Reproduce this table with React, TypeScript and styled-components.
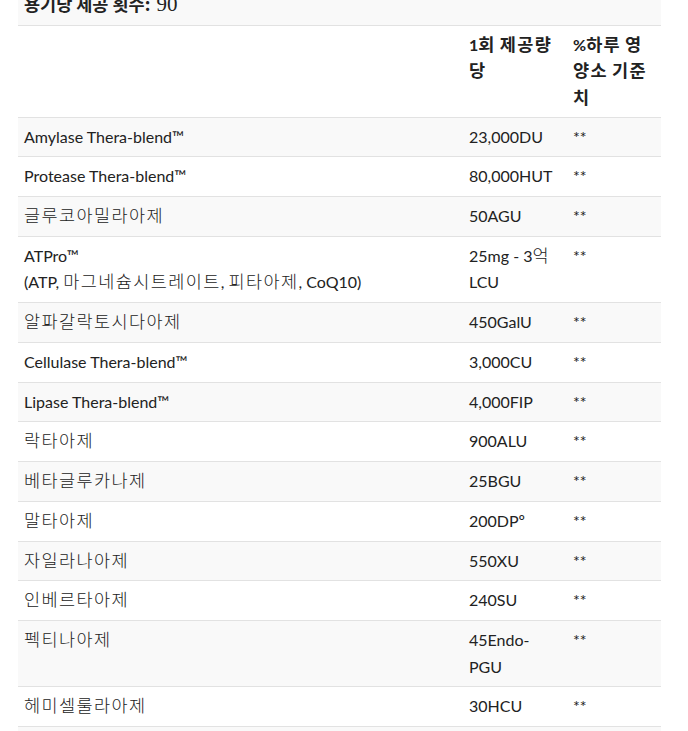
import React from "react";
import styled, { createGlobalStyle } from "styled-components";

const Global = createGlobalStyle`
  html, body { margin: 0; padding: 0; background: #fff; }
  body {
    font-family: Lato, "Noto Sans CJK KR", sans-serif;
    color: #222;
  }
`;

const Page = styled.div`
  width: 688px;
  height: 731px;
  overflow: hidden;
  padding: 0 27px 0 18px;
  box-sizing: border-box;
`;

const Table = styled.table`
  width: 643px;
  margin-top: -14px;
  border-collapse: collapse;
  table-layout: fixed;
  font-size: 16px;
  line-height: 26.5px;
`;

const Row = styled.tr<{ $shade?: boolean }>`
  background: ${(p) => (p.$shade ? "#f9f9f9" : "#fff")};
  border-bottom: 1px solid #e2e2e2;
`;

const Cell = styled.td`
  padding: 6px 6px 6.25px;
  vertical-align: top;
  text-align: left;
`;

const HeadCell = styled.th`
  padding: 6px 6px 5.25px;
  vertical-align: top;
  text-align: left;
  font-weight: 700;
`;

const Label = styled.strong`
  font-weight: 700;
  font-size: 17.5px;
  line-height: 20px;
  font-family: "Noto Sans CJK KR", Lato, sans-serif;
`;

const Count = styled.span`
  font-family: "Liberation Serif", serif;
  font-size: 21px;
  line-height: 20px;
  margin-left: 2px;
`;

const Ko = styled.span<{ $light?: boolean }>`
  font-size: 17.5px;
  line-height: 20px;
  letter-spacing: 1.4px;
  font-weight: ${(p) => (p.$light ? 300 : "inherit")};
`;

function Text({ value, light }: { value: string; light?: boolean }) {
  const parts = value.split(/([\uAC00-\uD7A3]+)/);
  return (
    <>
      {parts.map((p, i) =>
        /[\uAC00-\uD7A3]/.test(p) ? (
          <Ko key={i} $light={light}>
            {p}
          </Ko>
        ) : (
          <React.Fragment key={i}>{p}</React.Fragment>
        )
      )}
    </>
  );
}

const rows: [string, string][] = [
  ["Amylase Thera-blend™", "23,000DU"],
  ["Protease Thera-blend™", "80,000HUT"],
  ["글루코아밀라아제", "50AGU"],
  ["ATPro™\n(ATP, 마그네슘시트레이트, 피타아제, CoQ10)", "25mg - 3억 LCU"],
  ["알파갈락토시다아제", "450GalU"],
  ["Cellulase Thera-blend™", "3,000CU"],
  ["Lipase Thera-blend™", "4,000FIP"],
  ["락타아제", "900ALU"],
  ["베타글루카나제", "25BGU"],
  ["말타아제", "200DPº"],
  ["자일라나아제", "550XU"],
  ["인베르타아제", "240SU"],
  ["펙티나아제", "45Endo-PGU"],
  ["헤미셀룰라아제", "30HCU"],
  ["", ""],
];

export default function App() {
  return (
    <>
      <Global />
      <Page>
        <Table>
          <colgroup>
            <col style={{ width: 445 }} />
            <col style={{ width: 104 }} />
            <col style={{ width: 94 }} />
          </colgroup>
          <tbody>
            <Row $shade>
              <Cell colSpan={3}>
                <Label>용기당 제공 횟수:</Label> <Count>90</Count>
              </Cell>
            </Row>
            <Row>
              <HeadCell></HeadCell>
              <HeadCell>
                <Text value="1회 제공량 당" />
              </HeadCell>
              <HeadCell>
                <Text value="%하루 영양소 기준치" />
              </HeadCell>
            </Row>
            {rows.map(([name, amt], i) => (
              <Row key={i} $shade={i % 2 === 0}>
                <Cell>
                  {name.split("\n").map((l, j) => (
                    <React.Fragment key={j}>
                      {j > 0 && <br />}
                      <Text value={l} light />
                    </React.Fragment>
                  ))}
                </Cell>
                <Cell>
                  <Text value={amt} light />
                </Cell>
                <Cell>{name && "**"}</Cell>
              </Row>
            ))}
          </tbody>
        </Table>
      </Page>
    </>
  );
}
